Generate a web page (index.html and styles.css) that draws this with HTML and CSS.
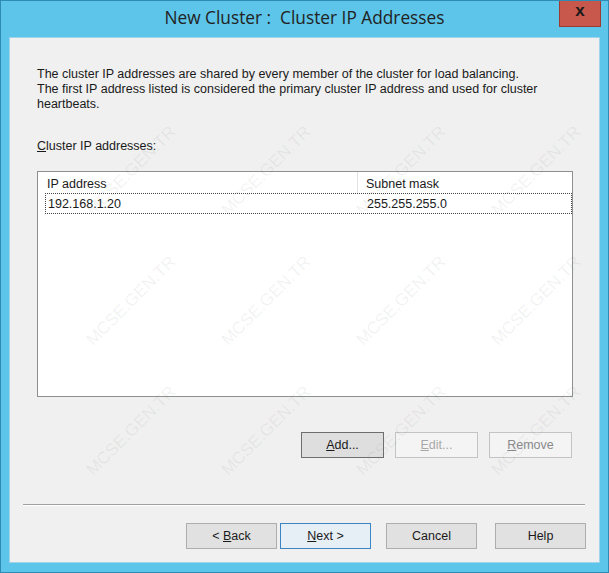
FILE: index.html
```html
<!DOCTYPE html>
<html>
<head>
<meta charset="utf-8">
<link rel="stylesheet" href="styles.css">
</head>
<body>
<div class="window">
  <div class="titlebar">
    <div class="title">New Cluster :&nbsp; Cluster IP Addresses</div>
    <div class="close">x</div>
  </div>
  <div class="content">
    <div class="main">
      <p class="desc">The cluster IP addresses are shared by every member of the cluster for load balancing.<br>The first IP address listed is considered the primary cluster IP address and used for cluster<br>heartbeats.</p>
      <div class="label"><u>C</u>luster IP addresses:</div>
      <div class="list">
        <div class="list-head">
          <div class="col col-ip">IP address</div>
          <div class="col col-mask">Subnet mask</div>
        </div>
        <div class="list-row">
          <div class="col col-ip">192.168.1.20</div>
          <div class="col col-mask">255.255.255.0</div>
        </div>
      </div>
      <div class="actions">
        <button class="btn btn-focus"><u>A</u>dd...</button>
        <button class="btn btn-disabled"><u>E</u>dit...</button>
        <button class="btn btn-disabled btn-remove"><u>R</u>emove</button>
      </div>
    </div>
    <div class="separator"></div>
    <div class="footer">
      <button class="btn btn-wide">&lt; <u>B</u>ack</button>
      <button class="btn btn-wide btn-default"><u>N</u>ext &gt;</button>
      <button class="btn btn-wide btn-cancel">Cancel</button>
      <button class="btn btn-wide btn-help">Help</button>
    </div>
  </div>
  <div class="watermark">
    <span>MCSE.GEN.TR</span><span>MCSE.GEN.TR</span><span>MCSE.GEN.TR</span><span>MCSE.GEN.TR</span>
    <span>MCSE.GEN.TR</span><span>MCSE.GEN.TR</span><span>MCSE.GEN.TR</span><span>MCSE.GEN.TR</span>
    <span>MCSE.GEN.TR</span><span>MCSE.GEN.TR</span><span>MCSE.GEN.TR</span><span>MCSE.GEN.TR</span>
  </div>
</div>
</body>
</html>
```

FILE: styles.css
```css
* { box-sizing: border-box; }
html, body { margin: 0; padding: 0; }
body {
  width: 609px;
  height: 573px;
  overflow: hidden;
  font-family: "Liberation Sans", Arial, sans-serif;
  font-size: 12.5px;
  color: #1a1a1a;
}
.window {
  position: relative;
  width: 609px;
  height: 573px;
  background: #5cc5e9;
  border: 1px solid #2f8bb3;
  padding: 0 8px 9px 8px;
  display: flex;
  flex-direction: column;
  overflow: hidden;
}
.titlebar {
  height: 36px;
  position: relative;
  display: flex;
  align-items: center;
  justify-content: center;
}
.title {
  font-family: "Open Sans", "Liberation Sans", sans-serif;
  font-size: 17.3px;
  color: #222;
  margin-top: -3px;
}
.close {
  position: absolute;
  top: -1px;
  right: -1px;
  width: 42px;
  height: 27px;
  background: #c8574c;
  border: 1px solid #9a3c34;
  border-top: none;
  color: #1a1a1a;
  font-weight: bold;
  font-size: 17px;
  line-height: 22px;
  text-align: center;
}
.content {
  flex: 1;
  background: #f0f0f0;
  border: 1px solid #9fd4ea;
  display: flex;
  flex-direction: column;
}
.main {
  padding: 29px 26px 0 27px;
  display: flex;
  flex-direction: column;
}
.desc {
  margin: 0;
  line-height: 15px;
}
.label {
  margin-top: 27px;
  line-height: 15px;
}
.list {
  margin-top: 17px;
  height: 226px;
  background: #fff;
  border: 1px solid #8e8f8f;
}
.list-head, .list-row {
  display: flex;
  height: 20px;
  align-items: center;
}
.list-head {
  height: 21px;
  padding-top: 3px;
}
.list-head .col-ip {
  border-right: 1px solid #e3e3e3;
  margin-top: -3px;
  padding-top: 3px;
  height: 21px;
  display: flex;
  align-items: center;
}
.list-row {
  margin: 0 0 0 7px;
  height: 21px;
  border: 1px dotted #444;
}
.col-ip { width: 320px; padding-left: 9px; }
.list-row .col-ip { width: 313px; padding-left: 2px; }
.col-mask { padding-left: 8px; }
.actions {
  margin-top: 35px;
  display: flex;
  justify-content: flex-end;
  gap: 11px;
  padding-right: 1px;
}
.btn {
  font-family: "Liberation Sans", Arial, sans-serif;
  font-size: 12.5px;
  color: #1a1a1a;
  width: 83px;
  height: 26px;
  background: #e1e1e1;
  border: 1px solid #adadad;
  padding: 0;
  margin: 0;
}
.btn-focus {
  border-color: #6e6e6e;
  background: #dedede;
}
.btn-disabled {
  background: #f4f4f4;
  border-color: #c4c4c4;
  color: #a8a8a8;
}
.btn-remove { color: #8a8a8a; }
.separator {
  margin: 46px 14px 0 13px;
  height: 2px;
  border-top: 1px solid #a0a0a0;
  border-bottom: 1px solid #ffffff;
}
.footer {
  margin-top: 17px;
  display: flex;
  padding-left: 176px;
}
.btn-wide { width: 91px; }
.btn-default {
  margin-left: 3px;
  border-color: #3c85c4;
  background: #e6eef6;
}
.btn-cancel { margin-left: 15px; }
.btn-help { margin-left: 18px; }
.watermark {
  position: absolute;
  left: 63px;
  top: 105px;
  display: grid;
  grid-template-columns: repeat(4, 135px);
  grid-template-rows: repeat(3, 130px);
  pointer-events: none;
}
.watermark span {
  display: flex;
  align-items: center;
  justify-content: center;
  transform: rotate(-45deg);
  font-family: "Liberation Sans", Arial, sans-serif;
  font-size: 17px;
  color: rgba(110, 110, 110, 0.09);
  white-space: nowrap;
}
```
